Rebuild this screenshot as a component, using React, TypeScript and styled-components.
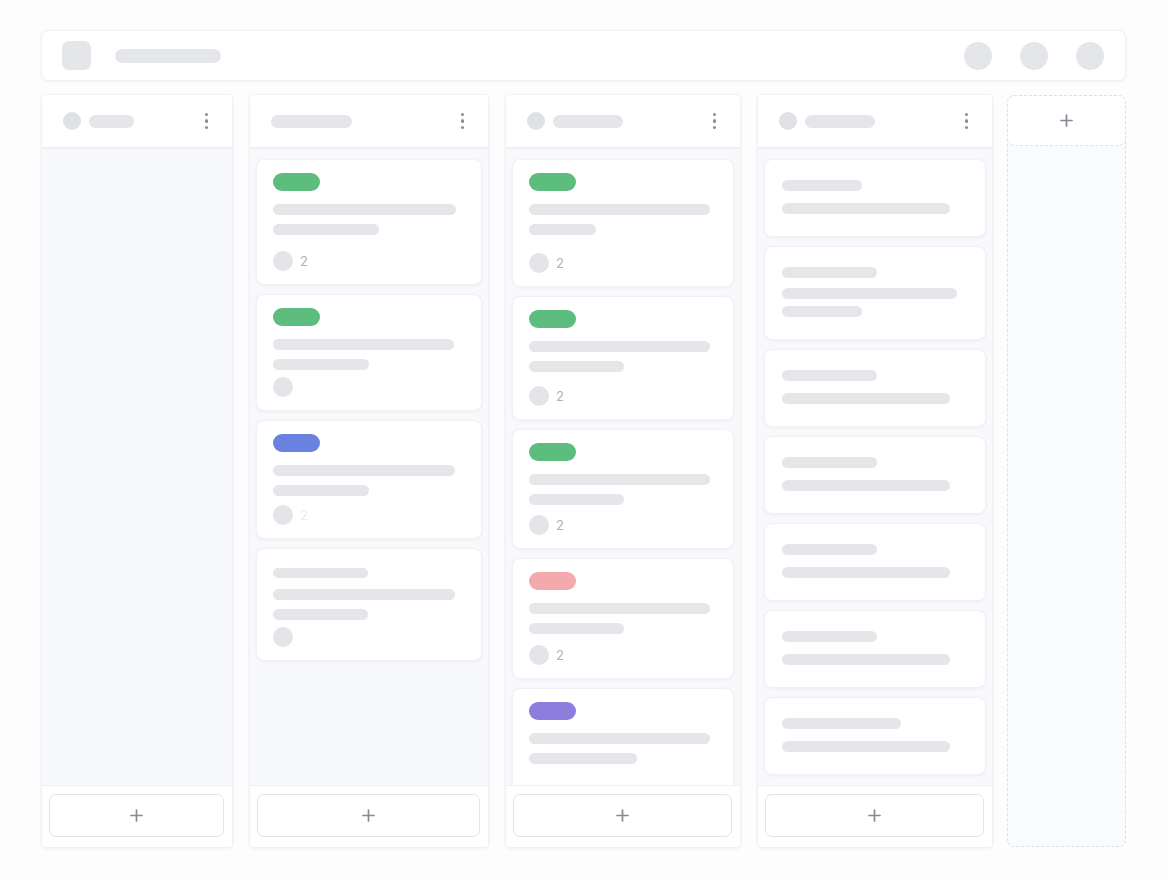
import React from "react";
import styled, { createGlobalStyle } from "styled-components";

const GlobalStyle = createGlobalStyle`
	* { box-sizing: border-box; }
	html, body {
		margin: 0;
		padding: 0;
		background: #fdfdfe;
		font-family: "Inter", "Liberation Sans", sans-serif;
	}
`;

type Tone = "green" | "blue" | "red" | "purple";

type CardData = {
	tag?: Tone;
	title?: number;
	lines: number[];
	avatar?: boolean;
	count?: number; // opacity of the little count, 0 = none
	metaGap?: number;
	top?: number;
	minH?: number;
};

type ColumnData = {
	width: number;
	dot: boolean;
	pill: number;
	cards: CardData[];
	compact?: boolean;
};

const tones: Record<Tone, string> = {
	green: "#5dbd7e",
	blue: "#6a82df",
	red: "#f4a9ad",
	purple: "#8c7ddf",
};

const columns: ColumnData[] = [
	{ width: 192, dot: true, pill: 45, cards: [] },
	{
		width: 240,
		dot: false,
		pill: 81,
		cards: [
			{ tag: "green", lines: [183, 106], avatar: true, count: 1, metaGap: 16 },
			{ tag: "green", lines: [181, 96], avatar: true, count: 0, metaGap: 7 },
			{ tag: "blue", lines: [182, 96], avatar: true, count: 0.25, metaGap: 9 },
			{ title: 95, lines: [182, 95], avatar: true, count: 0, metaGap: 7, top: 19 },
		],
	},
	{
		width: 236,
		dot: true,
		pill: 70,
		cards: [
			{ tag: "green", lines: [181, 67], avatar: true, count: 1, metaGap: 18 },
			{ tag: "green", lines: [181, 95], avatar: true, count: 1, metaGap: 14 },
			{ tag: "green", lines: [181, 95], avatar: true, count: 1, metaGap: 10 },
			{ tag: "red", lines: [181, 95], avatar: true, count: 1, metaGap: 11 },
			{ tag: "purple", lines: [181, 108], avatar: false, minH: 120 },
		],
	},
	{
		width: 236,
		dot: true,
		pill: 70,
		compact: true,
		cards: [
			{ title: 80, lines: [168] },
			{ title: 95, lines: [175, 80] },
			{ title: 95, lines: [168] },
			{ title: 95, lines: [168] },
			{ title: 95, lines: [168] },
			{ title: 95, lines: [168] },
			{ title: 119, lines: [168] },
		],
	},
];

const Plus = () => (
	<svg width="13" height="13" viewBox="0 0 13 13">
		<path d="M6.5 1v11M1 6.5h11" stroke="#858995" strokeWidth="1.7" strokeLinecap="round" />
	</svg>
);

const Kanban = () => {
	return (
		<Page>
			<GlobalStyle />
			<TopBar>
				<Logo />
				<TitleBar />
				<Spacer />
				<Actions>
					<RoundButton />
					<RoundButton />
					<RoundButton />
				</Actions>
			</TopBar>

			<Board>
				{columns.map((col, ci) => (
					<Column key={ci} $width={col.width}>
						<ColumnHeader>
							{col.dot && <HeaderDot />}
							<Skeleton $w={col.pill} $h={13} />
							<Kebab>
								<i />
								<i />
								<i />
							</Kebab>
						</ColumnHeader>
						<ColumnBody>
							{col.cards.map((card, i) =>
								col.compact ? (
									<CompactCard key={i}>
										<Skeleton $w={card.title ?? 80} $h={11} />
										{card.lines.map((w, li) => (
											<Skeleton
												key={li}
												$w={w}
												$h={11}
												$mt={li === 0 ? (card.lines.length > 1 ? 10 : 12) : 7}
											/>
										))}
									</CompactCard>
								) : (
									<Card key={i} $top={card.top ?? 13} $minH={card.minH}>
										{card.tag && <Tag $color={tones[card.tag]} />}
										{card.title && <Skeleton $w={card.title} $h={10} />}
										{card.lines.map((w, li) => (
											<Skeleton
												key={li}
												$w={w}
												$h={11}
												$mt={li === 0 ? (card.tag ? 13 : 11) : 9}
											/>
										))}
										{card.avatar && (
											<Meta $mt={card.metaGap ?? 16}>
												<Avatar />
												{!!card.count && <Count $o={card.count}>2</Count>}
											</Meta>
										)}
									</Card>
								)
							)}
						</ColumnBody>
						<ColumnFooter>
							<AddButton>
								<Plus />
							</AddButton>
						</ColumnFooter>
					</Column>
				))}

				<AddColumn>
					<AddColumnHead>
						<Plus />
					</AddColumnHead>
				</AddColumn>
			</Board>
		</Page>
	);
};

const Page = styled.div`
	padding: 30px 42px 0 41px;
	width: 1168px;
	height: 880px;
	overflow: hidden;
`;

const TopBar = styled.header`
	height: 51px;
	display: flex;
	align-items: center;
	padding: 0 21px 0 20px;
	background: #ffffff;
	border: 1px solid #eff0f3;
	border-radius: 7px;
	box-shadow: 0 1px 3px rgba(20, 30, 60, 0.05);
`;

const Logo = styled.div`
	width: 29px;
	height: 29px;
	border-radius: 7px;
	background: #e4e6ea;
`;

const TitleBar = styled.div`
	width: 106px;
	height: 14px;
	margin-left: 24px;
	border-radius: 7px;
	background: #e4e6ea;
`;

const Spacer = styled.div`
	flex: 1;
`;

const Actions = styled.div`
	display: flex;
	gap: 28px;
`;

const RoundButton = styled.div`
	width: 28px;
	height: 28px;
	border-radius: 50%;
	background: #e4e6ea;
`;

const Board = styled.main`
	margin-top: 13px;
	height: 754px;
	display: flex;
	gap: 16px;
`;

const Column = styled.section<{ $width: number }>`
	width: ${(p) => p.$width}px;
	flex: none;
	display: flex;
	flex-direction: column;
	background: #f8f9fc;
	border: 1px solid #eef0f3;
	border-radius: 5px;
	box-shadow: 0 1px 3px rgba(20, 30, 60, 0.06);
	overflow: hidden;
`;

const ColumnHeader = styled.div`
	height: 53px;
	flex: none;
	display: flex;
	align-items: center;
	gap: 8px;
	padding: 0 24px 0 21px;
	background: #ffffff;
	border-bottom: 1px solid #eceef2;
	box-shadow: 0 1px 2px rgba(20, 30, 60, 0.04);
`;

const HeaderDot = styled.div`
	width: 18px;
	height: 18px;
	border-radius: 50%;
	background: #dfe1e6;
`;

const Kebab = styled.div`
	margin-left: auto;
	display: flex;
	flex-direction: column;
	gap: 3px;
	i {
		width: 3.5px;
		height: 3.5px;
		border-radius: 50%;
		background: #8a8e9a;
	}
`;

const ColumnBody = styled.div`
	flex: 1;
	min-height: 0;
	overflow: hidden;
	display: flex;
	flex-direction: column;
	gap: 11px;
	padding: 12px 7px 0 7px;
`;

const Card = styled.div<{ $top: number; $minH?: number }>`
	flex: none;
	display: flex;
	flex-direction: column;
	min-height: ${(p) => (p.$minH ? `${p.$minH}px` : "auto")};
	padding: ${(p) => p.$top}px 16px 13px 16px;
	background: #ffffff;
	border-radius: 7px;
	box-shadow: 0 0 0 1px #f0f1f4, 0 1px 4px rgba(20, 30, 60, 0.07);
`;

const CompactCard = styled(Card).attrs({ $top: 20 })`
	padding: 20px 17px 22px 17px;
`;

const Tag = styled.div<{ $color: string }>`
	width: 47px;
	height: 18px;
	border-radius: 9px;
	background: ${(p) => p.$color};
`;

const Skeleton = styled.div<{ $w: number; $h: number; $mt?: number }>`
	width: ${(p) => p.$w}px;
	height: ${(p) => p.$h}px;
	margin-top: ${(p) => p.$mt ?? 0}px;
	border-radius: ${(p) => p.$h / 2}px;
	background: #e4e6ea;
	flex: none;
`;

const Meta = styled.div<{ $mt: number }>`
	margin-top: ${(p) => p.$mt}px;
	display: flex;
	align-items: center;
	gap: 7px;
`;

const Avatar = styled.div`
	width: 20px;
	height: 20px;
	border-radius: 50%;
	background: #e3e5e9;
`;

const Count = styled.span<{ $o: number }>`
	font-size: 13px;
	line-height: 1;
	color: #b0b3bb;
	opacity: ${(p) => p.$o};
`;

const ColumnFooter = styled.div`
	flex: none;
	height: 62px;
	padding: 8px 8px 10px 7px;
	background: #ffffff;
	border-top: 1px solid #eef0f3;
`;

const AddButton = styled.button`
	width: 100%;
	height: 43px;
	display: flex;
	align-items: center;
	justify-content: center;
	background: #ffffff;
	border: 1px solid #e2e4ea;
	border-radius: 7px;
	padding: 0;
`;

const AddColumn = styled.section`
	flex: 1;
	margin-left: -2px;
	height: 752px;
	margin-top: 1px;
	background: #fafbfc;
	border: 1.5px dashed #dde0e5;
	border-radius: 7px;
`;

const AddColumnHead = styled.div`
	height: 50px;
	display: flex;
	align-items: center;
	justify-content: center;
	border-bottom: 1.5px dashed #dde0e5;
	border-radius: 7px;
	background: #ffffff;
`;

export default Kanban;
